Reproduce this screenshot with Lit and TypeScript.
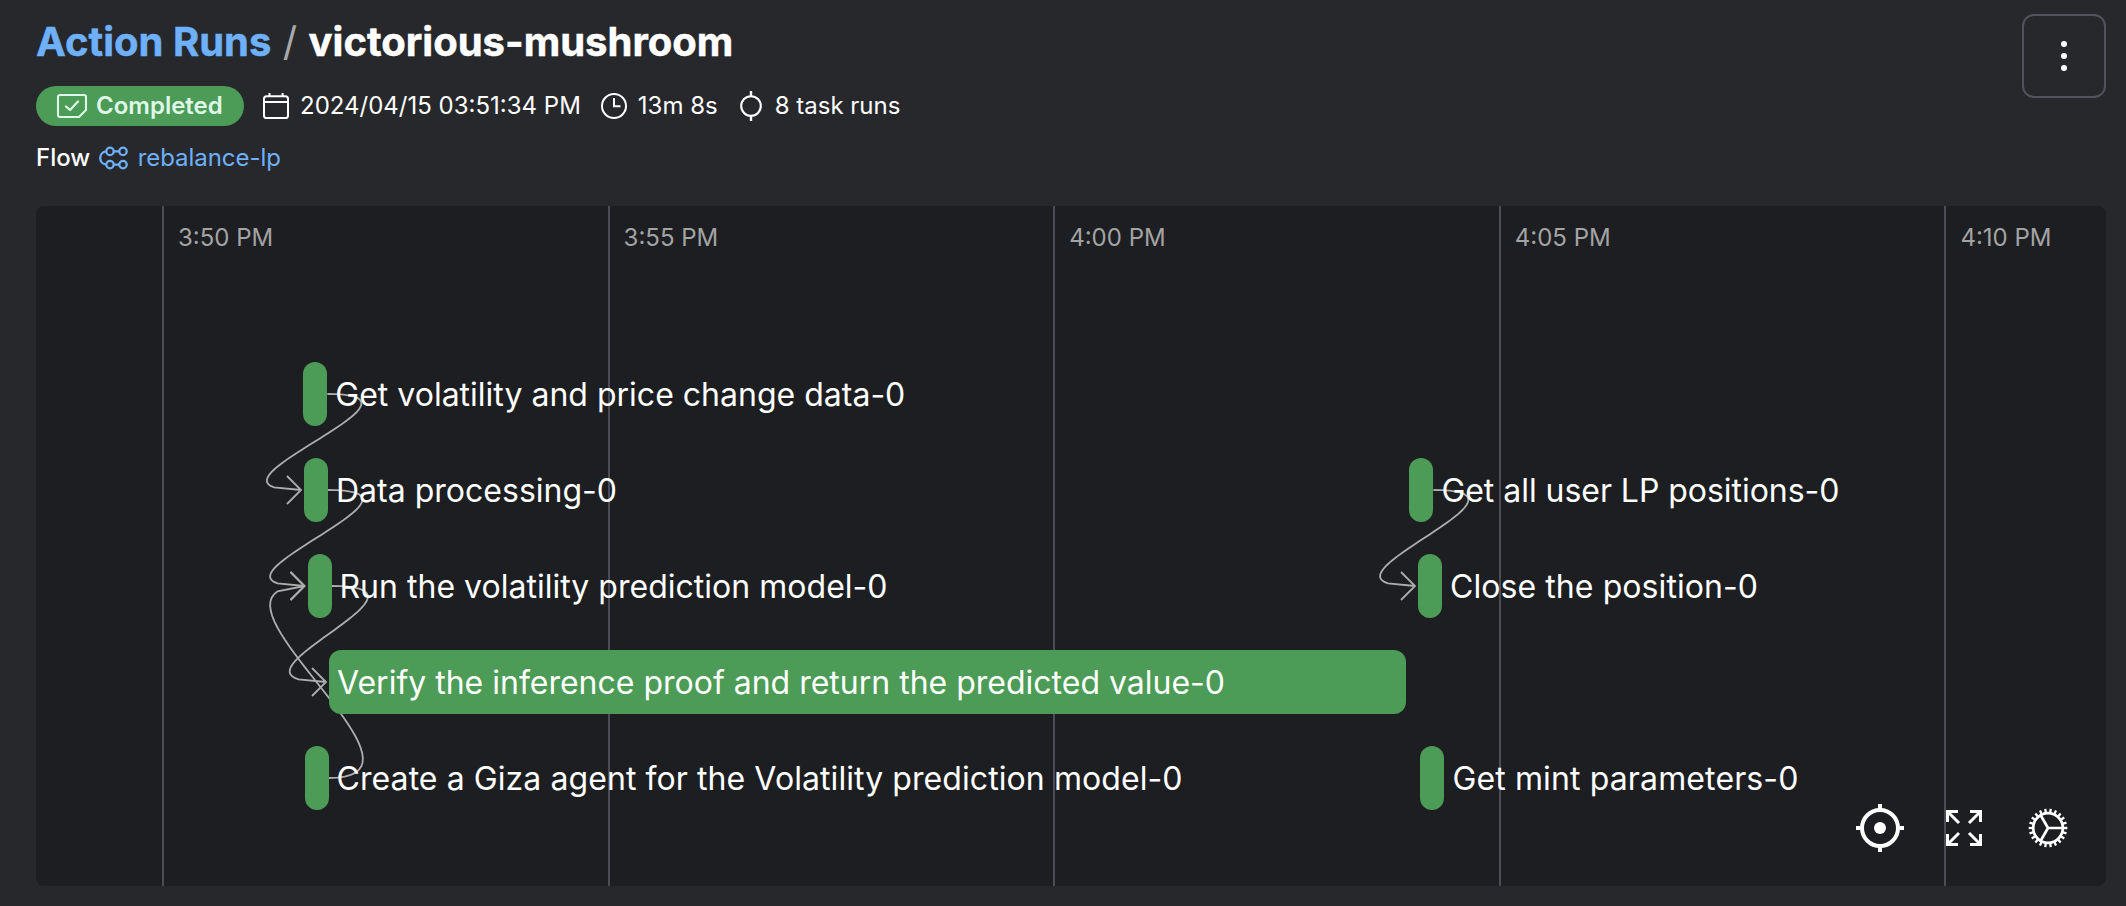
import { LitElement, html, svg, css } from "lit";
import { customElement } from "lit/decorators.js";

interface TaskNode { x: number; row: number; width: number; label: string; inside?: boolean; textWidth: number }

const ORIGIN_X = 36;
const ROW_TOP = 156;
const ROW_PITCH = 96;
const BAR_HEIGHT = 64;

const TICKS = ["3:50 PM", "3:55 PM", "4:00 PM", "4:05 PM", "4:10 PM"];

const NODES: TaskNode[] = [
  { x: 303.3, row: 0, width: 24, label: "Get volatility and price change data-0", textWidth: 570 },
  { x: 304, row: 1, width: 24, label: "Data processing-0", textWidth: 281 },
  { x: 307.5, row: 2, width: 24, label: "Run the volatility prediction model-0", textWidth: 548 },
  { x: 329, row: 3, width: 1076.6, label: "Verify the inference proof and return the predicted value-0", inside: true, textWidth: 888 },
  { x: 304.5, row: 4, width: 24, label: "Create a Giza agent for the Volatility prediction model-0", textWidth: 846 },
  { x: 1409.4, row: 1, width: 24, label: "Get all user LP positions-0", textWidth: 398 },
  { x: 1418, row: 2, width: 24, label: "Close the position-0", textWidth: 308 },
  { x: 1420.4, row: 4, width: 24, label: "Get mint parameters-0", textWidth: 346 },
];

const EDGES: [number, number][] = [[0, 1], [1, 2], [2, 3], [4, 2], [5, 6]];

const rowCenter = (row: number) => ROW_TOP + row * ROW_PITCH + BAR_HEIGHT / 2;

function edgePath(from: TaskNode, to: TaskNode): string {
  const reach = 128;
  const sx = from.x + from.width - ORIGIN_X;
  const sy = rowCenter(from.row);
  const ex = to.x - 3 - ORIGIN_X;
  const ey = rowCenter(to.row);
  const points: string[] = [];
  const at = (t: number) => {
    const u = 1 - t;
    const x = u * u * u * sx + 3 * u * u * t * (sx + reach) + 3 * u * t * t * (ex - reach) + t * t * t * ex;
    const y = sy + (ey - sy) * (3 * t * t - 2 * t * t * t);
    return `${x.toFixed(2)} ${y.toFixed(2)}`;
  };
  for (let i = 0; i <= 36; i++) points.push(at((i / 36) * 0.9));
  points.push(at(1));
  return `M${points.join("L")}M${ex - 14} ${ey - 14}L${ex} ${ey}L${ex - 14} ${ey + 14}`;
}

@customElement("run-header")
export class RunHeader extends LitElement {
  static styles = css`
    :host { display: flex; justify-content: space-between; align-items: flex-start; }
    .info { display: flex; flex-direction: column; }
    h1 { margin: 0; padding-bottom: 1px; font-size: 40px; line-height: 55px; font-weight: 700; display: flex; gap: 11.4px; white-space: pre; color: #fff; }
    h1 span:not(.slash) { -webkit-text-stroke: 0.5px currentColor; }
    .link { color: #6eb0f9; }
    .slash { color: #a9a9a9; font-weight: 400; }
    .meta { display: flex; align-items: center; height: 40px; margin-top: 16px; font-size: 24px; line-height: 32px; color: #fff; gap: 19px; }
    .item { display: flex; align-items: center; gap: 10px; white-space: nowrap; }
    .badge { display: flex; align-items: center; gap: 8px; height: 40px; width: 208px; box-sizing: border-box; padding-left: 20px; margin-right: -1px; border-radius: 20px; background: #4c9b56; color: #def7e8; font-weight: 600; }
    .flow { display: flex; align-items: center; gap: 8px; height: 32px; margin-top: 16px; font-size: 24px; line-height: 32px; color: #fff; font-weight: 500; }
    .flow .link { font-weight: 400; letter-spacing: -0.05px; display: flex; align-items: center; gap: 7.5px; }
    svg { display: block; fill: none; stroke: currentColor; }
    .menu { width: 84px; height: 84px; box-sizing: border-box; border: 2px solid #51525c; border-radius: 12px; background: transparent; padding: 0; display: flex; align-items: center; justify-content: center; color: #fff; }
    .menu svg { fill: currentColor; stroke: none; }
  `;
  render() {
    return html`
      <div class="info">
        <h1><span class="link">Action Runs</span><span class="slash">/</span><span>victorious-mushroom</span></h1>
        <div class="meta">
          <span class="badge">
            <svg width="32" height="32" viewBox="0 0 32 32" stroke-width="2.1" stroke-linejoin="round" stroke-linecap="round"><path d="M4 5H28Q30 5 30 7V20L23 27H4Q2 27 2 25V7Q2 5 4 5Z"/><path d="M10 16.5L14 20L22 11.5" stroke-width="2.3"/></svg>
            Completed</span>
          <span class="item">
            <svg width="28" height="28" viewBox="0 0 28 28" stroke-width="2"><rect x="2" y="4.2" width="24" height="21.8" rx="2.6"/><path d="M2 10H26M7.5 1V5M20.6 1V5"/></svg>
            2024/04/15 03:51:34 PM</span>
          <span class="item">
            <svg width="28" height="28" viewBox="0 0 28 28" stroke-width="2"><circle cx="14" cy="14" r="12"/><path d="M14 6V14.3H20.5"/></svg>
            13m 8s</span>
          <span class="item">
            <svg width="28" height="32" viewBox="0 0 28 32" stroke-width="2.1"><circle cx="14" cy="16" r="9.8"/><path d="M14 1V6M14 26V31" stroke-width="2.4"/></svg>
            8 task runs</span>
        </div>
        <div class="flow"><span>Flow</span>
          <span class="link">
            <svg width="32" height="28" viewBox="0 0 32 28" stroke-width="2.3"><circle cx="12" cy="7.4" r="3.7"/><circle cx="25" cy="7.4" r="3.7"/><circle cx="12" cy="20.6" r="3.7"/><circle cx="25" cy="20.6" r="3.7"/><path d="M15.7 7.4H21.3M15.7 20.6H21.3M8.3 7.4C.2 8 .2 20 8.3 20.6"/></svg>
            rebalance-lp</span>
        </div>
      </div>
      <button class="menu" aria-label="More">
        <svg width="32" height="32" viewBox="0 0 32 32"><circle cx="16" cy="4" r="3"/><circle cx="16" cy="16" r="3"/><circle cx="16" cy="28" r="3"/></svg>
      </button>`;
  }
}

@customElement("run-graph")
export class RunGraph extends LitElement {
  static styles = css`
    :host { display: block; position: relative; overflow: hidden; height: 680px; border-radius: 8px; background: #1d1e22; }
    .axis { display: flex; height: 100%; padding-left: 126px; }
    .tick { flex: 0 0 445.6px; box-sizing: border-box; border-left: 2px solid #4b4c55; padding: 17px 0 0 14px; font-size: 24px; line-height: 30px; color: #a3a3a3; white-space: nowrap; }
    .edges { position: absolute; inset: 0; fill: none; stroke: #adadad; stroke-width: 1.8; }
    .bar { position: absolute; height: 64px; border-radius: 12px; background: #4c9b56; }
    .labels { position: absolute; inset: 0; font-size: 32px; fill: #fff; }
    .tools { position: absolute; right: 34px; bottom: 34px; display: grid; grid-template-columns: repeat(3, 48px); place-items: center; gap: 36px; color: #fff; }
    .tools svg { display: block; fill: none; stroke: currentColor; }
  `;
  render() {
    const teeth = Array.from({ length: 22 }, (_, i) => (i * 360) / 22);
    return html`
      <div class="axis">${TICKS.map((t) => html`<div class="tick">${t}</div>`)}</div>
      <svg class="edges" width="2070" height="680">
        ${EDGES.map(([a, b]) => svg`<path d=${edgePath(NODES[a], NODES[b])} />`)}
      </svg>
      ${NODES.map((n) => html`<div class="bar" style="left:${n.x - ORIGIN_X}px;top:${ROW_TOP + n.row * ROW_PITCH}px;width:${n.width}px"></div>`)}
      <svg class="labels" width="2070" height="680">
        ${NODES.map((n) => svg`<text x=${n.x + (n.inside ? 8 : n.width + 8) - ORIGIN_X} y=${rowCenter(n.row) + 12} textLength=${n.textWidth}>${n.label}</text>`)}
      </svg>
      <div class="tools">
        <svg width="48" height="48" viewBox="0 0 48 48" stroke-width="4"><circle cx="24" cy="24" r="18"/><path d="M24 0V6M24 42V48M0 24H6M42 24H48"/><circle cx="24" cy="24" r="6" fill="currentColor" stroke="none"/></svg>
        <svg width="36" height="36" viewBox="0 0 36 36" stroke-width="3"><path d="M1.5 12V1.5H12M24 1.5H34.5V12M34.5 24V34.5H24M12 34.5H1.5V24M1.5 1.5L13 13M34.5 1.5L23 13M34.5 34.5L23 23M1.5 34.5L13 23"/></svg>
        <svg width="40" height="40" viewBox="0 0 40 40" stroke-width="2.7"><circle cx="20" cy="20" r="14.8"/><path d="M20 20H35M20 20L12.5 7M20 20L12.5 33"/>${teeth.map((a) => svg`<path d="M35 20H39.3" stroke-width="2.3" transform="rotate(${a} 20 20)"/>`)}</svg>
      </div>`;
  }
}

@customElement("app-root")
export class AppRoot extends LitElement {
  static styles = css`
    :host { display: flex; flex-direction: column; box-sizing: border-box; width: 100%; height: 906px; padding: 14px 20px 20px 36px; background: #27282c; font-family: Inter, sans-serif; gap: 32px; }
  `;
  render() {
    return html`<run-header></run-header><run-graph></run-graph>`;
  }
}
